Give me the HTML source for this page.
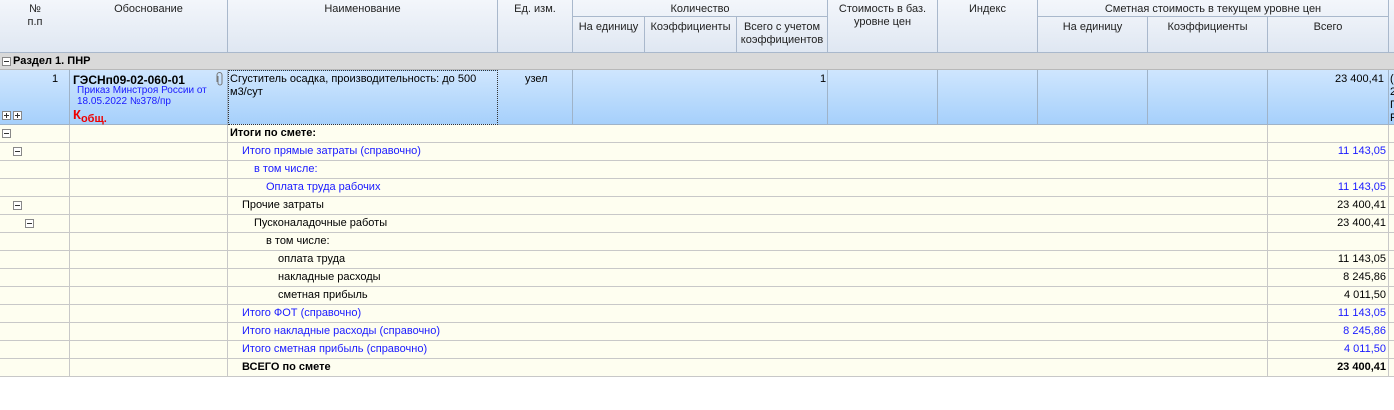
<!DOCTYPE html>
<html><head><meta charset="utf-8"><style>
*{margin:0;padding:0;box-sizing:border-box}
body{width:1394px;height:410px;background:#fff;font-family:"Liberation Sans","DejaVu Sans",sans-serif;font-size:11px;color:#000;position:relative;overflow:hidden}
.a{position:absolute;white-space:nowrap}
.hd{position:absolute;top:0;height:53px;background:linear-gradient(#f3f6fb,#dfe7f2);border-right:1px solid #a9b8cc;border-bottom:1px solid #a9b8cc;text-align:center;padding-top:3px;line-height:13px;color:#222}
.sub{position:absolute;top:16px;height:37px;background:linear-gradient(#eef2f8,#dfe7f2);border-right:1px solid #a9b8cc;border-bottom:1px solid #a9b8cc;border-top:1px solid #a9b8cc;text-align:center;padding-top:4px;line-height:13px;color:#222}
.r1{position:absolute;top:70px;height:55px;background:linear-gradient(#cfe6fe,#a6d0fb);border-right:1px solid #9fb3c8;border-bottom:1px solid #9fb3c8}
.row{position:absolute;left:0;width:1394px;height:18px;border-bottom:1px solid #c8c8c8;background:#fefef0}
.row .c{position:absolute;top:0;height:17px;border-right:1px solid #c8c8c8}
.row .t{position:absolute;top:2px;white-space:nowrap}
.row .v{position:absolute;top:2px;right:9px;white-space:nowrap}
.blue{color:#1a1aff}
.mi{position:absolute;width:9px;height:9px;border:1px solid #888;background:#fff}
.mi:after{content:"";position:absolute;left:1px;top:3px;width:5px;height:1px;background:#333}
.pl:before{content:"";position:absolute;left:3px;top:1px;width:1px;height:5px;background:#333}
</style></head><body>
<div class="hd" style="left:0;width:71px">№<br>п.п</div>
<div class="hd" style="left:70px;width:158px">Обоснование</div>
<div class="hd" style="left:228px;width:270px">Наименование</div>
<div class="hd" style="left:498px;width:75px">Ед. изм.</div>
<div class="hd" style="left:573px;width:255px">Количество</div>
<div class="sub" style="left:573px;width:72px">На единицу</div>
<div class="sub" style="left:645px;width:92px">Коэффициенты</div>
<div class="sub" style="left:737px;width:91px">Всего с учетом<br>коэффициентов</div>
<div class="hd" style="left:828px;width:110px">Стоимость в баз.<br>уровне цен</div>
<div class="hd" style="left:938px;width:100px">Индекс</div>
<div class="hd" style="left:1038px;width:351px">Сметная стоимость в текущем уровне цен</div>
<div class="sub" style="left:1038px;width:110px">На единицу</div>
<div class="sub" style="left:1148px;width:120px">Коэффициенты</div>
<div class="sub" style="left:1268px;width:121px">Всего</div>
<div class="hd" style="left:1389px;width:5px;border-right:none"></div>

<div class="a" style="left:0;top:53px;width:1394px;height:17px;background:#d9d9d9;border-bottom:1px solid #b8b8b8"></div>
<div class="mi" style="left:2px;top:57px"></div>
<div class="a" style="left:13px;top:55px;font-weight:bold">Раздел 1. ПНР</div>

<div class="r1" style="left:0;width:70px"></div>
<div class="r1" style="left:70px;width:158px"></div>
<div class="r1" style="left:228px;width:270px;border:1px dotted #333"></div>
<div class="r1" style="left:498px;width:75px"></div>
<div class="r1" style="left:573px;width:255px"></div>
<div class="r1" style="left:828px;width:110px"></div>
<div class="r1" style="left:938px;width:100px"></div>
<div class="r1" style="left:1038px;width:110px"></div>
<div class="r1" style="left:1148px;width:120px"></div>
<div class="r1" style="left:1268px;width:121px"></div>
<div class="r1" style="left:1389px;width:5px;border-right:none"></div>
<div class="a" style="left:52px;top:73px">1</div>
<div class="mi pl" style="left:2px;top:111px"></div><div class="mi pl" style="left:13px;top:111px"></div>
<div class="a" style="left:73px;top:73px;font-weight:bold;font-size:12px">ГЭСНп09-02-060-01</div>
<svg class="a" style="left:216px;top:72px" width="8" height="14" viewBox="0 0 8 14"><path d="M2 4 V11 a2 2 0 0 0 4 0 V3 a2.5 2.5 0 0 0 -5 0 V10" fill="none" stroke="#777" stroke-width="1"/></svg>
<div class="a" style="left:77px;top:85px;font-size:10px;color:#1a1aff;line-height:11px">Приказ Минстроя России от<br>18.05.2022 №378/пр</div>
<div class="a" style="left:73px;top:107px;color:#e00;font-weight:bold;font-size:13px">К<span style="font-size:11px;vertical-align:-3px">общ.</span></div>
<div class="a" style="left:230px;top:73px;line-height:13px">Сгуститель осадка, производительность: до 500<br>м3/сут</div>
<div class="a" style="left:525px;top:73px">узел</div>
<div class="a" style="left:820px;top:73px">1</div>
<div class="a" style="left:1335px;top:73px">23 400,41</div>
<div class="a" style="left:1390px;top:73px;line-height:13px">(<br>2<br>Г<br>Р</div>

<div id="rows"></div>
<script>
const R=[
[2,230,"Итоги по смете:","",1,0],
[13,242,"Итого прямые затраты (справочно)","11 143,05",0,1],
[-1,254,"в том числе:","",0,1],
[-1,266,"Оплата труда рабочих","11 143,05",0,1],
[13,242,"Прочие затраты","23 400,41",0,0],
[25,254,"Пусконаладочные работы","23 400,41",0,0],
[-1,266,"в том числе:","",0,0],
[-1,278,"оплата труда","11 143,05",0,0],
[-1,278,"накладные расходы","8 245,86",0,0],
[-1,278,"сметная прибыль","4 011,50",0,0],
[-1,242,"Итого ФОТ (справочно)","11 143,05",0,1],
[-1,242,"Итого накладные расходы (справочно)","8 245,86",0,1],
[-1,242,"Итого сметная прибыль (справочно)","4 011,50",0,1],
[-1,242,"ВСЕГО по смете","23 400,41",1,0]];
let h="";
R.forEach((r,i)=>{const top=125+18*i;const cls=(r[5]?"blue":"");const st=r[4]?"font-weight:bold":"";
h+=`<div class="row" style="top:${top}px"><div class="c" style="left:0;width:70px"></div><div class="c" style="left:70px;width:158px"></div><div class="c" style="left:228px;width:1040px"></div><div class="c" style="left:1268px;width:121px"></div>`+
(r[0]>=0?`<div class="mi" style="left:${r[0]}px;top:4px"></div>`:"")+
`<div class="t ${cls}" style="left:${r[1]}px;${st}">${r[2]}</div><div class="v ${cls}" style="right:8px;${st}">${r[3]}</div></div>`;});
document.getElementById("rows").innerHTML=h;
</script>
</body></html>
